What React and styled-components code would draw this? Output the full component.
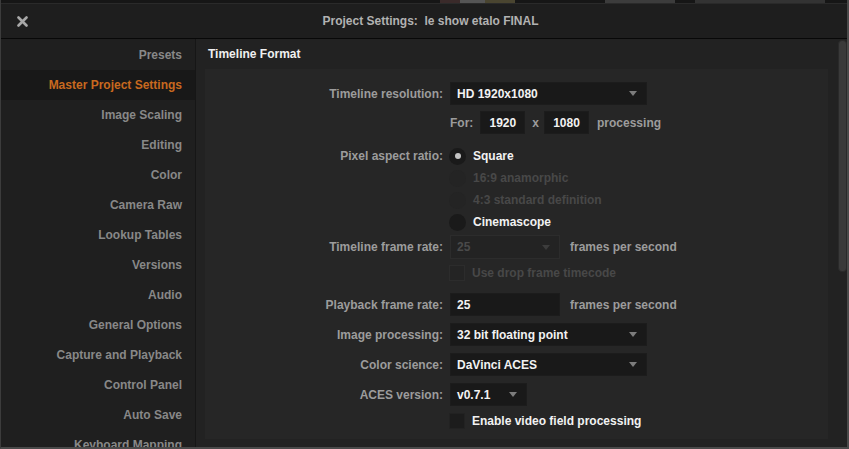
import styled, { createGlobalStyle } from 'styled-components';

const GlobalStyle = createGlobalStyle`
  html, body {
    margin: 0;
    padding: 0;
    background: #111;
    font-family: "Liberation Sans", Arial, sans-serif;
  }
`;

const Window = styled.div`
  width: 849px;
  height: 449px;
  box-sizing: border-box;
  border-left: 1px solid #3c3c3c;
  border-right: 2px solid #4a4a4a;
  border-bottom: 2px solid #4a4a4a;
  background: #1f1f1f;
  display: flex;
  flex-direction: column;
  overflow: hidden;
  font-size: 12px;
  font-weight: bold;
`;

const BackStrip = styled.div`
  height: 3px;
  flex: none;
  display: flex;
  background: #161616;
  border-bottom: 1px solid #2a2a2a;
`;

const StripPiece = styled.div`
  width: ${(p) => p.w}px;
  background: ${(p) => p.c};
`;

const TitleBar = styled.div`
  height: 34px;
  flex: none;
  display: flex;
  align-items: center;
  background: #1e1e1e;
  border-bottom: 1px solid #080808;
`;

const CloseButton = styled.div`
  width: 42px;
  display: flex;
  justify-content: center;
  align-items: center;
`;

const Title = styled.div`
  flex: 1;
  text-align: center;
  color: #b2b2b2;
  font-size: 12px;
  margin-right: 29px;
`;

const Body = styled.div`
  flex: 1;
  display: flex;
  min-height: 0;
`;

const Sidebar = styled.div`
  width: 194px;
  flex: none;
  padding-top: 1px;
  background: #1f1f1f;
  border-right: 1px solid #161616;
  display: flex;
  flex-direction: column;
`;

const NavItem = styled.div`
  height: 30px;
  flex: none;
  display: flex;
  align-items: center;
  justify-content: flex-end;
  padding-right: 13px;
  color: ${(p) => (p.active ? '#c8691f' : '#888888')};
  background: ${(p) => (p.active ? '#181818' : 'transparent')};
  white-space: nowrap;
`;

const Content = styled.div`
  flex: 1;
  display: flex;
  background: #222222;
  padding-left: 9px;
`;

const Main = styled.div`
  width: 623px;
  display: flex;
  flex-direction: column;
`;

const SectionTitle = styled.div`
  height: 30px;
  display: flex;
  align-items: center;
  padding-left: 3px;
  color: #f0f0f0;
  font-size: 12px;
`;

const Panel = styled.div`
  height: 370px;
  background: #262626;
  padding-top: 13px;
  box-sizing: border-box;
`;

const Row = styled.div`
  height: ${(p) => p.h || 23}px;
  margin-top: ${(p) => p.mt || 0}px;
  display: grid;
  grid-template-columns: 238px auto;
  column-gap: 7px;
  align-items: center;
`;

const Label = styled.div`
  text-align: right;
  color: #9c9c9c;
  white-space: nowrap;
`;

const Controls = styled.div`
  display: flex;
  align-items: center;
  height: 100%;
`;

const Dropdown = styled.div`
  width: ${(p) => p.w}px;
  height: ${(p) => p.h || 23}px;
  box-sizing: border-box;
  background: ${(p) => (p.disabled ? '#232323' : '#191919')};
  border: 1px solid ${(p) => (p.disabled ? '#2c2c2c' : '#1c1c1c')};
  display: flex;
  align-items: center;
  justify-content: space-between;
  padding: 0 9px 0 6px;
  color: ${(p) => (p.disabled ? '#4a4a4a' : '#f2f2f2')};
`;

const Arrow = styled.span`
  width: 0;
  height: 0;
  border-left: 4px solid transparent;
  border-right: 4px solid transparent;
  border-top: 5px solid ${(p) => (p.disabled ? '#3c3c3c' : '#7c7c7c')};
`;

const Field = styled.div`
  width: ${(p) => p.w}px;
  height: 23px;
  box-sizing: border-box;
  background: #191919;
  border: 1px solid #1c1c1c;
  display: flex;
  align-items: center;
  justify-content: ${(p) => (p.center ? 'center' : 'flex-start')};
  padding-left: ${(p) => (p.center ? 0 : 6)}px;
  margin-left: ${(p) => p.ml || 0}px;
  color: #f2f2f2;
`;

const Muted = styled.span`
  color: #9c9c9c;
  margin-left: ${(p) => p.ml || 0}px;
`;

const Radio = styled.span`
  width: 17px;
  height: 17px;
  border-radius: 50%;
  flex: none;
  background: ${(p) => (p.disabled ? '#242424' : '#1a1a1a')};
  display: flex;
  align-items: center;
  justify-content: center;
  margin-left: -1px;
  &::after {
    content: '';
    width: 6px;
    height: 6px;
    border-radius: 50%;
    background: #c4c4c4;
    display: ${(p) => (p.checked ? 'block' : 'none')};
  }
`;

const Box = styled.span`
  width: 16px;
  height: 16px;
  flex: none;
  box-sizing: border-box;
  background: ${(p) => (p.disabled ? '#242424' : '#1c1c1c')};
  border: 1px solid ${(p) => (p.disabled ? '#2c2c2c' : '#222')};
  margin-left: -1px;
`;

const Option = styled.span`
  margin-left: 7px;
  color: ${(p) => (p.disabled ? '#484848' : '#f2f2f2')};
`;

const Scrollbar = styled.div`
  width: 9px;
  margin-left: 10px;
  padding-top: 1px;
  display: flex;
  flex-direction: column;
`;

const Thumb = styled.div`
  width: 7px;
  height: 230px;
  background: #3a3a3a;
  border: 1px solid #2a2a2a;
  border-radius: 4px;
`;

const navItems = [
  'Presets',
  'Master Project Settings',
  'Image Scaling',
  'Editing',
  'Color',
  'Camera Raw',
  'Lookup Tables',
  'Versions',
  'Audio',
  'General Options',
  'Capture and Playback',
  'Control Panel',
  'Auto Save',
  'Keyboard Mapping',
];

const radios = [
  { label: 'Square', checked: true },
  { label: '16:9 anamorphic', disabled: true },
  { label: '4:3 standard definition', disabled: true },
  { label: 'Cinemascope' },
];

const strip = [
  [440, '#161616'], [20, '#3a2a2a'], [25, '#555'], [30, '#4a4530'], [90, '#161616'],
  [70, '#3c3c3c'], [20, '#161616'], [130, '#333'], [22, '#161616'],
];

export default function App() {
  return (
    <>
      <GlobalStyle />
      <Window>
        <BackStrip>
          {strip.map(([w, c], i) => (
            <StripPiece key={i} w={w} c={c} />
          ))}
        </BackStrip>
        <TitleBar>
          <CloseButton>
            <svg width="11" height="11" viewBox="0 0 11 11">
              <path d="M1.5 1.5 L9.5 9.5 M9.5 1.5 L1.5 9.5" stroke="#a8a8a8" strokeWidth="2.6" strokeLinecap="round" />
            </svg>
          </CloseButton>
          <Title>Project Settings:&nbsp; le show etalo FINAL</Title>
        </TitleBar>
        <Body>
          <Sidebar>
            {navItems.map((item, i) => (
              <NavItem key={item} active={i === 1}>
                {item}
              </NavItem>
            ))}
          </Sidebar>
          <Content>
            <Main>
              <SectionTitle>Timeline Format</SectionTitle>
              <Panel>
                <Row>
                  <Label>Timeline resolution:</Label>
                  <Controls>
                    <Dropdown w={197}>
                      HD 1920x1080 <Arrow />
                    </Dropdown>
                  </Controls>
                </Row>
                <Row mt={6}>
                  <span />
                  <Controls>
                    <Muted>For:</Muted>
                    <Field w={45} center ml={7}>1920</Field>
                    <Muted ml={7}>x</Muted>
                    <Field w={45} center ml={5}>1080</Field>
                    <Muted ml={8}>processing</Muted>
                  </Controls>
                </Row>
                {radios.map((r, i) => (
                  <Row key={r.label} h={22} mt={i === 0 ? 11 : 0}>
                    <Label>{i === 0 ? 'Pixel aspect ratio:' : ''}</Label>
                    <Controls>
                      <Radio checked={r.checked} disabled={r.disabled} />
                      <Option disabled={r.disabled}>{r.label}</Option>
                    </Controls>
                  </Row>
                ))}
                <Row h={24} mt={2}>
                  <Label>Timeline frame rate:</Label>
                  <Controls>
                    <Dropdown w={110} h={24} disabled>
                      25 <Arrow disabled />
                    </Dropdown>
                    <Muted ml={10}>frames per second</Muted>
                  </Controls>
                </Row>
                <Row h={22} mt={3}>
                  <span />
                  <Controls>
                    <Box disabled />
                    <Option disabled>Use drop frame timecode</Option>
                  </Controls>
                </Row>
                <Row mt={9}>
                  <Label>Playback frame rate:</Label>
                  <Controls>
                    <Field w={110}>25</Field>
                    <Muted ml={10}>frames per second</Muted>
                  </Controls>
                </Row>
                <Row mt={7}>
                  <Label>Image processing:</Label>
                  <Controls>
                    <Dropdown w={197}>
                      32 bit floating point <Arrow />
                    </Dropdown>
                  </Controls>
                </Row>
                <Row mt={7}>
                  <Label>Color science:</Label>
                  <Controls>
                    <Dropdown w={197}>
                      DaVinci ACES <Arrow />
                    </Dropdown>
                  </Controls>
                </Row>
                <Row mt={7}>
                  <Label>ACES version:</Label>
                  <Controls>
                    <Dropdown w={77}>
                      v0.7.1 <Arrow />
                    </Dropdown>
                  </Controls>
                </Row>
                <Row h={22} mt={4}>
                  <span />
                  <Controls>
                    <Box />
                    <Option>Enable video field processing</Option>
                  </Controls>
                </Row>
              </Panel>
            </Main>
            <Scrollbar>
              <Thumb />
            </Scrollbar>
          </Content>
        </Body>
      </Window>
    </>
  );
}
